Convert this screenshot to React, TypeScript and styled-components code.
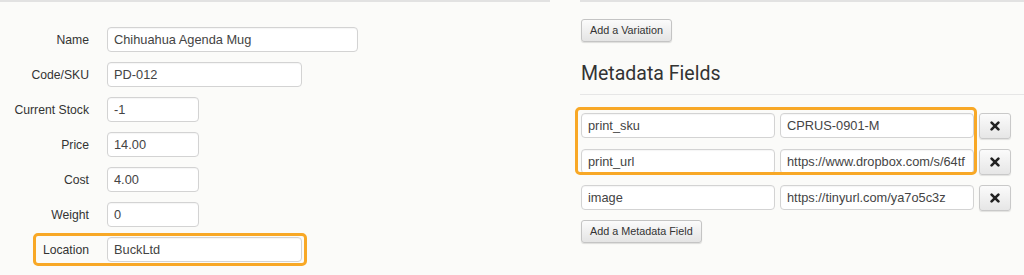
import React from "react";
import styled, { createGlobalStyle } from "styled-components";

const GlobalStyle = createGlobalStyle`
  html, body { margin: 0; padding: 0; background: #fbfbf9; }
  body { font-family: "Liberation Sans", Arial, sans-serif; color: #333; }
`;

const Page = styled.div`
  display: flex;
  width: 1024px;
  height: 275px;
  overflow: hidden;
  background: #fbfbf9;
`;

const LeftPane = styled.section`
  width: 550px;
  flex: none;
  border-top: 2px solid #e2e2e2;
  padding-top: 25px;
  display: flex;
  flex-direction: column;
  gap: 10px;
`;

const FieldRow = styled.div`
  position: relative;
  display: flex;
  align-items: center;
  height: 25px;
`;

const Label = styled.div`
  width: 89px;
  margin-right: 18px;
  text-align: right;
  font-size: 12.2px;
  color: #333;
`;

const Box = styled.div<{ $w: number }>`
  box-sizing: border-box;
  width: ${(p) => p.$w}px;
  height: 25px;
  line-height: 23px;
  padding: 0 6px;
  border: 1px solid #d3d3d3;
  border-radius: 4px;
  background: #fff;
  box-shadow: inset 0 1px 1px rgba(0, 0, 0, 0.04);
  font-size: 12.8px;
  color: #444;
  white-space: nowrap;
  overflow: hidden;
`;

const Highlight = styled.div<{ $l: number; $t: number; $w: number; $h: number }>`
  position: absolute;
  left: ${(p) => p.$l}px;
  top: ${(p) => p.$t}px;
  width: ${(p) => p.$w}px;
  height: ${(p) => p.$h}px;
  box-sizing: border-box;
  border: 3px solid #f8a826;
  border-radius: 5px;
  pointer-events: none;
`;

const RightPane = styled.section`
  flex: 1;
  margin-left: 30px;
  border-top: 2px solid #e2e2e2;
  padding-top: 17px;
  display: flex;
  flex-direction: column;
  align-items: flex-start;
`;

const Button = styled.div<{ $mt?: number }>`
  box-sizing: border-box;
  height: 23px;
  line-height: 21px;
  margin-left: 1px;
  margin-top: ${(p) => p.$mt ?? 0}px;
  padding: 0 8px;
  border: 1px solid #c4c4c4;
  border-radius: 3px;
  background: linear-gradient(#fbfbfb, #e4e4e4);
  box-shadow: 0 1px 1px rgba(0, 0, 0, 0.12);
  font-size: 10.8px;
  color: #333;
  white-space: nowrap;
`;

const Heading = styled.h2`
  align-self: stretch;
  margin: 21px 0 0;
  padding: 0 0 9px 1px;
  font-family: Roboto, "Liberation Sans", sans-serif;
  font-weight: 400;
  font-size: 19.5px;
  line-height: 22px;
  color: #333;
  border-bottom: 1px solid #e6e6e6;
`;

const MetaList = styled.div`
  position: relative;
  margin: 18px 0 0 1px;
  display: flex;
  flex-direction: column;
  gap: 11px;
`;

const MetaRow = styled.div`
  display: flex;
  gap: 5px;
  height: 25px;
`;

const IconButton = styled.div`
  box-sizing: border-box;
  width: 32px;
  height: 26px;
  display: flex;
  align-items: center;
  justify-content: center;
  border: 1px solid #c9c9c9;
  border-radius: 3px;
  background: linear-gradient(#fbfbfb, #e6e6e6);
  box-shadow: 0 1px 1px rgba(0, 0, 0, 0.1);
`;

const CloseIcon = () => (
  <svg width="10" height="10" viewBox="0 0 10 10">
    <path d="M1.6 1.6 L8.4 8.4 M8.4 1.6 L1.6 8.4" stroke="#222" strokeWidth="2.6" strokeLinecap="round" />
  </svg>
);

const fields = [
  { label: "Name", value: "Chihuahua Agenda Mug", w: 251 },
  { label: "Code/SKU", value: "PD-012", w: 195 },
  { label: "Current Stock", value: "-1", w: 92 },
  { label: "Price", value: "14.00", w: 92 },
  { label: "Cost", value: "4.00", w: 92 },
  { label: "Weight", value: "0", w: 92 },
  { label: "Location", value: "BuckLtd", w: 195, hl: true },
];

const meta = [
  { k: "print_sku", v: "CPRUS-0901-M" },
  { k: "print_url", v: "https://www.dropbox.com/s/64tf" },
  { k: "image", v: "https://tinyurl.com/ya7o5c3z" },
];

export default function App() {
  return (
    <>
      <GlobalStyle />
      <Page>
        <LeftPane>
          {fields.map((f) => (
            <FieldRow key={f.label}>
              <Label>{f.label}</Label>
              <Box $w={f.w}>{f.value}</Box>
              {f.hl && <Highlight $l={33} $t={-4} $w={274} $h={33} />}
            </FieldRow>
          ))}
        </LeftPane>
        <RightPane>
          <Button>Add a Variation</Button>
          <Heading>Metadata Fields</Heading>
          <MetaList>
            {meta.map((m) => (
              <MetaRow key={m.k}>
                <Box $w={194}>{m.k}</Box>
                <Box $w={194}>{m.v}</Box>
                <IconButton>
                  <CloseIcon />
                </IconButton>
              </MetaRow>
            ))}
            <Highlight $l={-6} $t={-6} $w={402} $h={68} />
          </MetaList>
          <Button $mt={10}>Add a Metadata Field</Button>
        </RightPane>
      </Page>
    </>
  );
}
